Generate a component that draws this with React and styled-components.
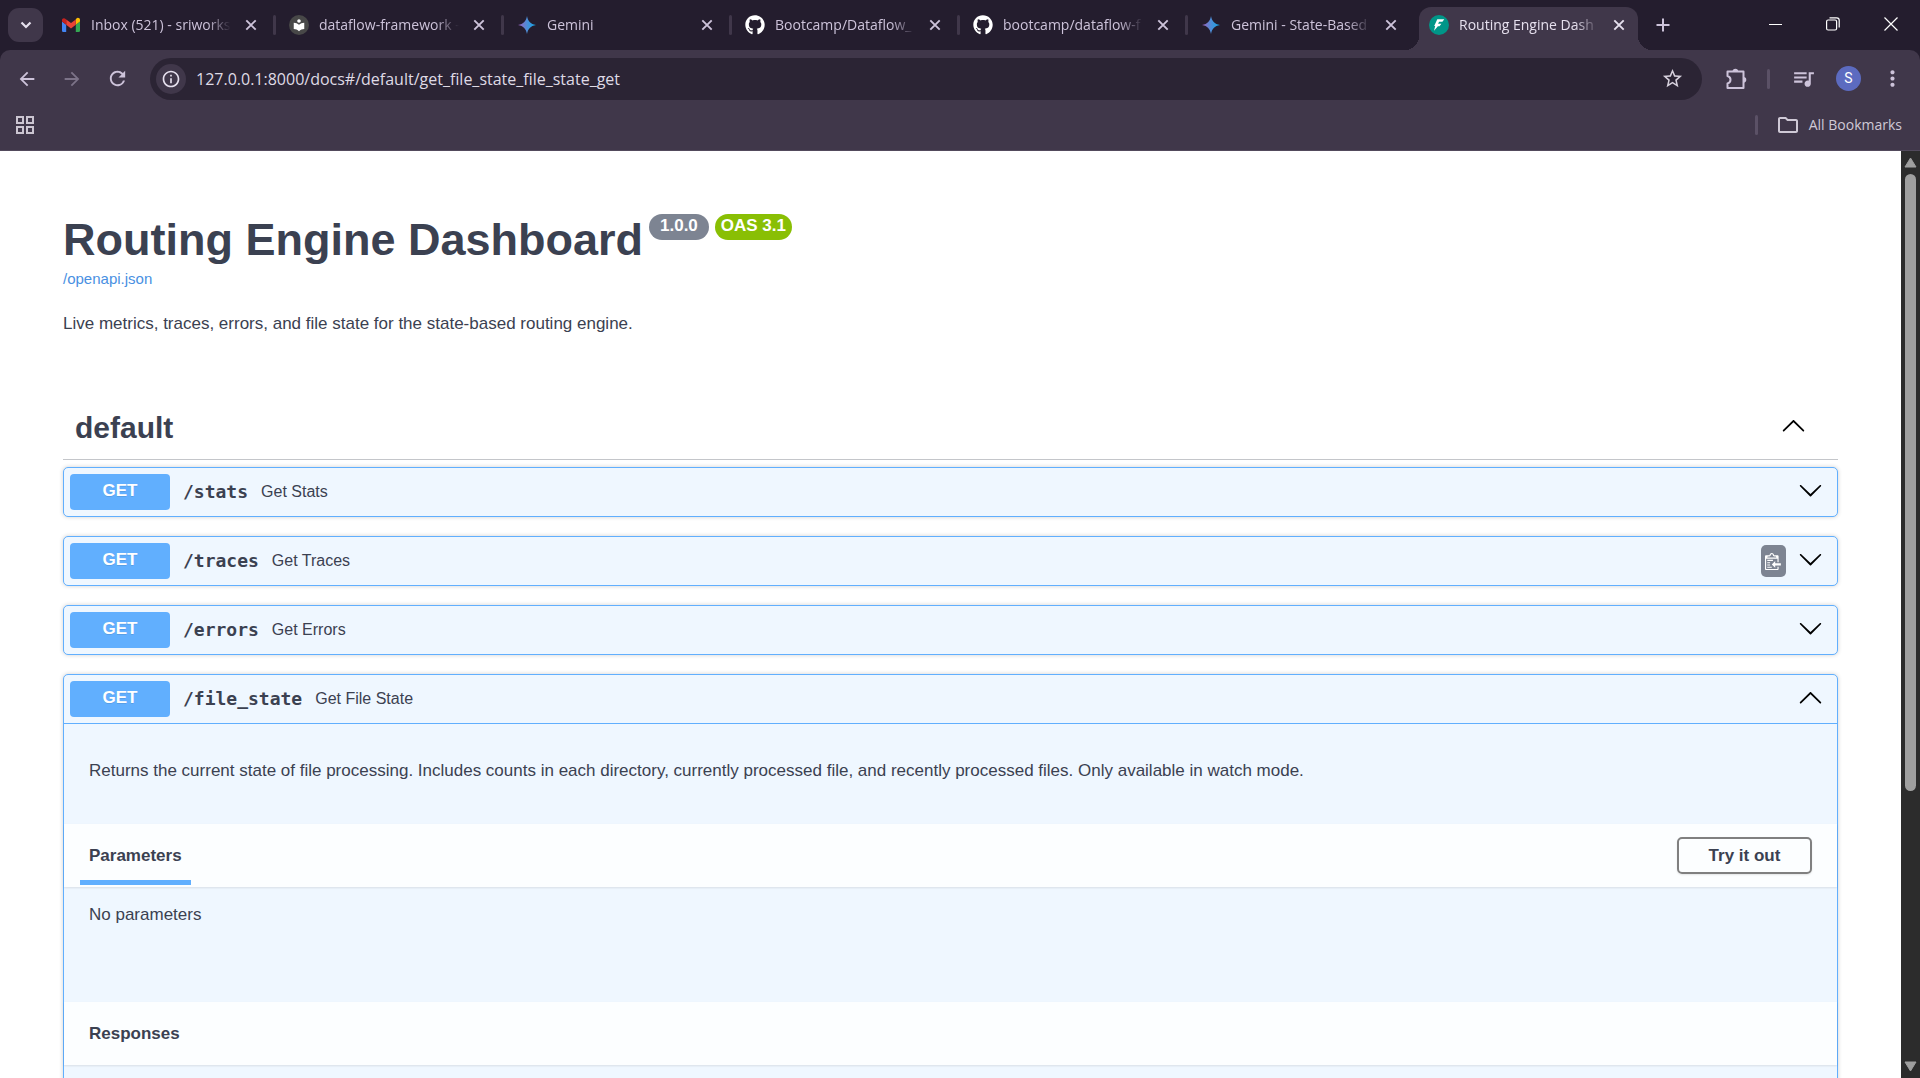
import React from "react";
import styled, { createGlobalStyle, css } from "styled-components";
import {
  MdArrowBack,
  MdArrowForward,
  MdRefresh,
  MdInfoOutline,
  MdStarBorder,
  MdQueueMusic,
  MdMoreVert,
  MdLocalLibrary,
  MdOutlineFolder,
} from "react-icons/md";
import { FaGithub } from "react-icons/fa";

const color = {
  frame: "#241d2e",
  toolbar: "#40374a",
  field: "#2b2434",
  chromeText: "#cdc3da",
  chromeLight: "#e6e0ee",
  ink: "#3b4151",
  get: "#61affe",
  getTint: "#eff7ff",
  slate: "#7d8492",
};

const uiFont = '"Open Sans", "Noto Sans", sans-serif';
const docFont = '"Liberation Sans", Arial, sans-serif';
const monoFont = '"DejaVu Sans Mono", monospace';

const GlobalStyle = createGlobalStyle`
  *, *::before, *::after { box-sizing: border-box; }
  body { margin: 0; background: #fff; }
  button { border: 0; padding: 0; background: none; font: inherit; color: inherit; cursor: pointer; }
  h1, h2, h3, h4, p { margin: 0; }
  svg { display: block; flex: none; }
`;

const Window = styled.div`
  display: flex;
  flex-direction: column;
  height: 100vh;
  overflow: hidden;
  background: #fff;
`;

/* ---------- browser chrome ---------- */

const Chrome = styled.header`
  flex: none;
  background: ${color.frame};
  color: ${color.chromeText};
  font-family: ${uiFont};
`;

const TabStrip = styled.div`
  display: flex;
  height: 50px;
  padding-left: 8px;
`;

const TabSearch = styled.button`
  display: grid;
  place-items: center;
  flex: none;
  width: 35px;
  height: 34px;
  margin: 8px 8px 0 0;
  border-radius: 11px;
  background: ${color.toolbar};
  color: ${color.chromeLight};
`;

const Separator = styled.span`
  flex: none;
  width: 3px;
  height: 20px;
  border-radius: 2px;
  background: ${(p) => (p.$hidden ? "transparent" : p.$tone || color.toolbar)};
`;

const TabSlot = styled.div`
  display: flex;
  align-items: center;
  gap: 3px;
  flex: 0 1 228px;
  min-width: 0;
`;

const Tab = styled.div`
  position: relative;
  display: flex;
  align-items: center;
  gap: 10px;
  flex: 1;
  min-width: 0;
  height: 43px;
  margin-top: 7px;
  padding: 0 9px 7px 10px;
  ${(p) =>
    p.$active &&
    css`
      background: ${color.toolbar};
      color: ${color.chromeLight};
      border-radius: 12px 12px 0 0;
      &::before,
      &::after {
        content: "";
        position: absolute;
        bottom: 0;
        width: 14px;
        height: 14px;
      }
      &::before {
        right: 100%;
        background: radial-gradient(circle at 0 0, transparent 14px, ${color.toolbar} 14px);
      }
      &::after {
        left: 100%;
        background: radial-gradient(circle at 100% 0, transparent 14px, ${color.toolbar} 14px);
      }
    `}
`;

const TabTitle = styled.button`
  flex: 1;
  min-width: 0;
  overflow: hidden;
  white-space: nowrap;
  text-align: left;
  font-size: 14px;
  line-height: 20px;
  mask-image: linear-gradient(to right, #000 calc(100% - 24px), transparent);
`;

const IconButton = styled.button`
  display: grid;
  place-items: center;
  flex: none;
  width: ${(p) => p.$size || 20}px;
  height: ${(p) => p.$size || 20}px;
  color: ${(p) => p.$tone || "inherit"};
`;

const NewTab = styled(IconButton)`
  margin: 10px 0 0 1px;
`;

const WindowControls = styled.div`
  display: flex;
  margin-left: auto;
  color: #fff;
`;

const WindowButton = styled.button`
  display: grid;
  place-items: center;
  width: 58px;
  height: 48px;
`;

const Toolbar = styled.div`
  display: flex;
  align-items: center;
  height: 50px;
  padding: 7px 14px 0 11px;
  background: ${color.toolbar};
  border-radius: 10px 10px 0 0;
`;

const NavButtons = styled.div`
  display: flex;
  gap: 13px;
  padding-right: 17px;
`;

const Omnibox = styled.div`
  display: flex;
  align-items: center;
  flex: 1;
  height: 42px;
  padding: 0 18px 0 6px;
  gap: 10px;
  border-radius: 21px;
  background: ${color.field};
`;

const SiteInfo = styled(IconButton)`
  border-radius: 50%;
  background: ${color.toolbar};
`;

const UrlInput = styled.input`
  flex: 1;
  min-width: 0;
  padding: 0;
  border: 0;
  outline: 0;
  background: none;
  color: #dfdae5;
  font-family: ${uiFont};
  font-size: 16px;
  line-height: 24px;
`;

const ToolbarActions = styled.div`
  display: flex;
  align-items: center;
  gap: 17px;
  padding-left: 20px;
`;

const Avatar = styled.button`
  width: 25px;
  height: 25px;
  border-radius: 50%;
  background: #5c6bc0;
  color: #fff;
  font-family: Roboto, sans-serif;
  font-size: 14px;
  line-height: 25px;
`;

const BookmarkBar = styled.div`
  display: flex;
  align-items: center;
  justify-content: space-between;
  height: 51px;
  padding: 0 18px 0 15px;
  background: ${color.toolbar};
  border-bottom: 1px solid #524a5c;
`;

const BookmarkGroup = styled.div`
  display: flex;
  align-items: center;
  gap: 18px;
`;

const AllBookmarks = styled.button`
  display: flex;
  align-items: center;
  gap: 9px;
  color: #cfc9d6;
  font-size: 14px;
  line-height: 20px;
`;

/* ---------- document ---------- */

const Viewport = styled.div`
  display: flex;
  flex: 1;
  min-height: 0;
`;

const Page = styled.main`
  flex: 1;
  min-width: 0;
  overflow: hidden;
  color: ${color.ink};
  font-family: ${docFont};
`;

const Wrapper = styled.div`
  max-width: 1825px;
  margin: 0 auto;
  padding: 0 25px;
`;

const Info = styled.section`
  padding: 63px 0 60px;
`;

const Title = styled.h1`
  display: flex;
  align-items: flex-start;
  font-size: 45px;
  line-height: 52px;
`;

const Badge = styled.span`
  margin-left: 6px;
  padding: 0 ${(p) => p.$pad}px;
  height: 26px;
  border-radius: 13px;
  background: ${(p) => p.$fill};
  color: #fff;
  font-size: 17px;
  line-height: 24px;
`;

const SpecLink = styled.a`
  display: block;
  width: max-content;
  margin-top: 3px;
  color: #4990e2;
  font-size: 15px;
  line-height: 20px;
  text-decoration: none;
`;

const Paragraph = styled.p`
  font-size: 17px;
  line-height: 24px;
`;

const Lead = styled(Paragraph)`
  margin-top: 23px;
`;

const TagHeader = styled.div`
  display: flex;
  align-items: center;
  justify-content: space-between;
  height: 64px;
  margin-bottom: 7px;
  padding: 0 32px 0 12px;
  border-bottom: 1px solid rgba(59, 65, 81, 0.3);
`;

const TagName = styled.h2`
  font-size: 30px;
  line-height: 36px;
`;

const Operation = styled.article`
  margin-bottom: 19px;
  border: 1px solid ${color.get};
  border-radius: 5px;
  background: ${color.getTint};
  box-shadow: 0 0 4px rgba(0, 0, 0, 0.19);
`;

const Summary = styled.div`
  display: flex;
  align-items: center;
  gap: 12px;
  padding: 6px 14px 6px 6px;
  ${(p) => p.$open && css`border-bottom: 1px solid ${color.get};`}
`;

const SummaryControl = styled.button`
  display: flex;
  align-items: center;
  gap: 13px;
  flex: 1;
  min-width: 0;
  text-align: left;
`;

const Method = styled.span`
  width: 100px;
  height: 36px;
  border-radius: 4px;
  background: ${color.get};
  color: #fff;
  font-size: 17px;
  font-weight: 700;
  line-height: 34px;
  text-align: center;
  text-shadow: 0 1px 0 rgba(0, 0, 0, 0.1);
`;

const Path = styled.span`
  font-family: ${monoFont};
  font-size: 18px;
  font-weight: 700;
  line-height: 24px;
`;

const Brief = styled.span`
  font-size: 16px;
  line-height: 24px;
`;

const CopyButton = styled.button`
  display: grid;
  place-items: center;
  width: 25px;
  height: 32px;
  border-radius: 5px;
  background: ${color.slate};
`;

const Description = styled.div`
  padding: 35px 25px 41px;
`;

const SectionHeader = styled.div`
  display: flex;
  align-items: center;
  justify-content: space-between;
  height: 63px;
  padding: 0 25px 0 16px;
  background: rgba(255, 255, 255, 0.8);
  box-shadow: 0 1px 2px rgba(0, 0, 0, 0.1);
`;

const SectionTitle = styled.h3`
  position: relative;
  padding: 0 9px;
  font-size: 17px;
  line-height: 24px;
  ${(p) =>
    p.$active &&
    css`
      &::after {
        content: "";
        position: absolute;
        left: 0;
        right: 0;
        bottom: -17px;
        height: 5px;
        background: ${color.get};
      }
    `}
`;

const TryButton = styled.button`
  width: 135px;
  height: 37px;
  border: 2px solid gray;
  border-radius: 5px;
  font-size: 17px;
  font-weight: 700;
  box-shadow: 0 1px 2px rgba(0, 0, 0, 0.1);
`;

const SectionBody = styled.div`
  min-height: 115px;
  padding: 16px 25px;
`;

/* ---------- scrollbar ---------- */

const Scrollbar = styled.div`
  display: flex;
  flex-direction: column;
  align-items: center;
  flex: none;
  width: 19px;
  background: #2c2c2c;
`;

const ScrollArrow = styled.span`
  display: grid;
  place-items: center;
  height: 23px;
`;

const ScrollTrack = styled.div`
  flex: 1;
`;

const ScrollThumb = styled.div`
  width: 11px;
  height: 70%;
  border-radius: 6px;
  background: #9f9f9f;
`;

/* ---------- drawings ---------- */

const CloseGlyph = () => (
  <svg width="12" height="12" viewBox="0 0 12 12" stroke="currentColor" strokeWidth="1.9" fill="none">
    <path d="M1.3 1.3l9.4 9.4M10.7 1.3l-9.4 9.4" />
  </svg>
);

const GmailIcon = () => (
  <svg width="20" height="20" viewBox="0 0 20 20">
    <path d="M1 5v10.700q0 1.300 1.300 1.300H5.200V9.700L1 6.500z" fill="#4285f4" />
    <path d="M19 5v10.700q0 1.300-1.300 1.300H14.800V9.700L19 6.500z" fill="#34a853" />
    <path d="M14.800 4.500v5.300L19 6.600V5c0-2-2.200-2.900-3.600-1.600z" fill="#fbbc04" />
    <path d="M5.200 9.800V4.500L10 8.100l4.800-3.600v5.300L10 13.400z" fill="#ea4335" />
    <path d="M1 5v1.600l4.200 3.200V4.500l-.6-.6C3.200 2.500 1 3.200 1 5z" fill="#c5221f" />
  </svg>
);

const ReaderDisc = styled.span`
  display: grid;
  place-items: center;
  flex: none;
  width: 20px;
  height: 20px;
  border-radius: 50%;
  background: #484848;
  color: #fff;
`;

const GeminiIcon = ({ id }) => (
  <svg width="20" height="20" viewBox="0 0 20 20">
    <defs>
      <linearGradient id={id} x1="0" x2="1">
        <stop offset="0.1" stopColor="#9168c0" />
        <stop offset="0.5" stopColor="#4d8ed8" />
        <stop offset="0.9" stopColor="#1ba1e3" />
      </linearGradient>
    </defs>
    <path d="M10 1c.9 5 3.500 8.100 9 9-5.500.9-8.100 4-9 9-.9-5-3.500-8.100-9-9 5.500-.9 8.100-4 9-9z" fill={`url(#${id})`} />
  </svg>
);

const FastApiIcon = () => (
  <svg width="20" height="20" viewBox="0 0 20 20">
    <circle cx="10" cy="10" r="10" fill="#009688" />
    <path d="M8.300 4.300h7l-1.900 2.500h-3.300l-1 1.900h3.300l-1.900 2.500H8.900L5 15.800l1.200-4.900H5.200z" fill="#fff" />
  </svg>
);

const PuzzleIcon = () => (
  <svg width="22" height="22" viewBox="0 0 22 22" fill="none" stroke="currentColor" strokeWidth="2" strokeLinejoin="round">
    <path d="M2.500 3.500H18.500V20H2.500V15.500C4.500 15 5.500 13.700 5.500 11.800S4.500 8.500 2.500 8z" />
    <path d="M7.600 3.500a2.800 2.800 0 0 1 5.600 0zM18.500 9a2.800 2.800 0 0 1 0 5.600z" fill="currentColor" stroke="none" />
  </svg>
);

const AppsIcon = () => (
  <svg width="20" height="20" viewBox="0 0 20 20" fill="none" stroke="#cbc5d1" strokeWidth="2">
    <path d="M2 2h6v6H2zM12 2h6v6h-6zM2 12h6v6H2zM12 12h6v6h-6z" />
  </svg>
);

const ARROW_DOWN =
  "M17.418 6.109c.272-.268.709-.268.979 0s.271.701 0 .969l-7.908 7.830c-.27.268-.707.268-.979 0l-7.908-7.830c-.27-.268-.27-.701 0-.969.271-.268.709-.268.979 0L10 13.250l7.418-7.141z";
const ARROW_UP =
  "M17.418 14.908c.272.268.709.268.979 0s.271-.701 0-.969l-7.908-7.830c-.27-.268-.707-.268-.979 0l-7.908 7.830c-.27.268-.27.701 0 .969.271.268.709.268.979 0L10 7.767l7.418 7.141z";

const Arrow = ({ up }) => (
  <svg width="25" height="25" viewBox="0 2 20 20">
    <path d={up ? ARROW_UP : ARROW_DOWN} />
  </svg>
);

const ClipboardIcon = () => (
  <svg width="17" height="20" viewBox="0 0 15 16" fill="#fff">
    <path d="M2 13h4v1H2v-1zm5-6H2v1h5V7zm2 3V8l-3 3 3 3v-2h5v-2H9zM4.500 9H2v1h2.500V9zM2 12h2.500v-1H2v1zm9 1h1v2c-.02.28-.11.52-.3.7-.19.18-.42.28-.7.3H1c-.55 0-1-.45-1-1V4c0-.55.45-1 1-1h3c0-1.110.89-2 2-2 1.110 0 2 .89 2 2h3c.55 0 1 .45 1 1v5h-1V6H1v9h10v-2zM2 5h8c0-.55-.45-1-1-1H8c-.55 0-1-.45-1-1s-.45-1-1-1-1 .45-1 1-.45 1-1 1H3c-.55 0-1 .45-1 1z" />
  </svg>
);

/* ---------- content ---------- */

const tabs = [
  { title: "Inbox (521) - sriworks", icon: <GmailIcon /> },
  { title: "dataflow-framework -", icon: <ReaderDisc><MdLocalLibrary size={14} /></ReaderDisc> },
  { title: "Gemini", icon: <GeminiIcon id="gemini-a" /> },
  { title: "Bootcamp/Dataflow_", icon: <FaGithub size={20} color="#fff" /> },
  { title: "bootcamp/dataflow-f", icon: <FaGithub size={20} color="#fff" /> },
  { title: "Gemini - State-Based", icon: <GeminiIcon id="gemini-b" />, last: true },
  { title: "Routing Engine Dash", icon: <FastApiIcon />, active: true },
];

const operations = [
  { path: "/stats", brief: "Get Stats" },
  { path: "/traces", brief: "Get Traces", copy: true },
  { path: "/errors", brief: "Get Errors" },
  { path: "/file_state", brief: "Get File State", open: true },
];

function BrowserChrome() {
  return (
    <Chrome>
      <TabStrip>
        <TabSearch aria-label="Search tabs">
          <svg width="12" height="8" viewBox="0 0 12 8" fill="none" stroke="currentColor" strokeWidth="2.200">
            <path d="M1.500 1.500L6 6l4.500-4.500" />
          </svg>
        </TabSearch>
        {tabs.map((t) => (
          <TabSlot key={t.title}>
            <Tab $active={t.active}>
              {t.icon}
              <TabTitle>{t.title}</TabTitle>
              <IconButton aria-label="Close tab">
                <CloseGlyph />
              </IconButton>
            </Tab>
            <Separator $hidden={t.active || t.last} />
            <span />
          </TabSlot>
        ))}
        <NewTab $size={30} aria-label="New tab">
          <svg width="14" height="14" viewBox="0 0 14 14" stroke="currentColor" strokeWidth="2">
            <path d="M7 .5v13M.5 7h13" />
          </svg>
        </NewTab>
        <WindowControls>
          <WindowButton aria-label="Minimize">
            <svg width="13" height="13" viewBox="0 0 13 13" stroke="currentColor">
              <path d="M0 6.500h13" />
            </svg>
          </WindowButton>
          <WindowButton aria-label="Restore">
            <svg width="14" height="14" viewBox="0 0 14 14" fill="none" stroke="currentColor" strokeWidth="1.200">
              <rect x="0.600" y="3" width="10" height="10" rx="1.500" />
              <path d="M3.500 .8h7.200q2.500 0 2.500 2.500v7.200" />
            </svg>
          </WindowButton>
          <WindowButton aria-label="Close">
            <svg width="14" height="14" viewBox="0 0 14 14" stroke="currentColor" strokeWidth="1.200">
              <path d="M.5 .5l13 13M13.500 .5l-13 13" />
            </svg>
          </WindowButton>
        </WindowControls>
      </TabStrip>
      <Toolbar>
        <NavButtons>
          <IconButton $size={32} aria-label="Back"><MdArrowBack size={22} /></IconButton>
          <IconButton $size={32} $tone="#7c7388" aria-label="Forward"><MdArrowForward size={22} /></IconButton>
          <IconButton $size={32} aria-label="Reload"><MdRefresh size={23} /></IconButton>
        </NavButtons>
        <Omnibox>
          <SiteInfo $size={30} $tone={color.chromeLight} aria-label="View site information">
            <MdInfoOutline size={20} />
          </SiteInfo>
          <UrlInput
            aria-label="Address"
            defaultValue="127.0.0.1:8000/docs#/default/get_file_state_file_state_get"
          />
          <IconButton $size={24} $tone="#d6d0dc" aria-label="Bookmark this page">
            <MdStarBorder size={23} />
          </IconButton>
        </Omnibox>
        <ToolbarActions>
          <IconButton $size={28} aria-label="Extensions"><PuzzleIcon /></IconButton>
          <Separator $tone="#5b5166" />
          <IconButton $size={32} aria-label="Media"><MdQueueMusic size={25} /></IconButton>
          <Avatar>S</Avatar>
          <IconButton $size={28} aria-label="Menu"><MdMoreVert size={25} /></IconButton>
        </ToolbarActions>
      </Toolbar>
      <BookmarkBar>
        <IconButton aria-label="Apps"><AppsIcon /></IconButton>
        <BookmarkGroup>
          <Separator $tone="#5b5166" />
          <AllBookmarks>
            <MdOutlineFolder size={24} />
            All Bookmarks
          </AllBookmarks>
        </BookmarkGroup>
      </BookmarkBar>
    </Chrome>
  );
}

function OperationBlock({ op }) {
  return (
    <Operation>
      <Summary $open={op.open}>
        <SummaryControl aria-expanded={!!op.open}>
          <Method>GET</Method>
          <Path>{op.path}</Path>
          <Brief>{op.brief}</Brief>
        </SummaryControl>
        {op.copy && (
          <CopyButton aria-label="Copy to clipboard">
            <ClipboardIcon />
          </CopyButton>
        )}
        <IconButton $size={25} aria-label={op.open ? "Collapse operation" : "Expand operation"}>
          <Arrow up={op.open} />
        </IconButton>
      </Summary>
      {op.open && (
        <>
          <Description>
            <Paragraph>
              Returns the current state of file processing. Includes counts in each directory, currently processed
              file, and recently processed files. Only available in watch mode.
            </Paragraph>
          </Description>
          <SectionHeader>
            <SectionTitle $active>Parameters</SectionTitle>
            <TryButton>Try it out</TryButton>
          </SectionHeader>
          <SectionBody>
            <Paragraph>No parameters</Paragraph>
          </SectionBody>
          <SectionHeader>
            <SectionTitle>Responses</SectionTitle>
          </SectionHeader>
          <SectionBody />
        </>
      )}
    </Operation>
  );
}

export default function App() {
  return (
    <Window>
      <GlobalStyle />
      <BrowserChrome />
      <Viewport>
        <Page>
          <Wrapper>
            <Info>
              <Title>
                Routing Engine Dashboard
                <Badge $fill={color.slate} $pad={11}>1.0.0</Badge>
                <Badge $fill="#89bf04" $pad={6}>OAS 3.1</Badge>
              </Title>
              <SpecLink href="/openapi.json">/openapi.json</SpecLink>
              <Lead>Live metrics, traces, errors, and file state for the state-based routing engine.</Lead>
            </Info>
            <section>
              <TagHeader>
                <TagName>default</TagName>
                <IconButton $size={25} aria-label="Collapse section">
                  <Arrow up />
                </IconButton>
              </TagHeader>
              {operations.map((op) => (
                <OperationBlock key={op.path} op={op} />
              ))}
            </section>
          </Wrapper>
        </Page>
        <Scrollbar aria-hidden="true">
          <ScrollArrow>
            <svg width="13" height="11" viewBox="0 0 13 11" fill="#9f9f9f">
              <path d="M6.500 1L12 10H1z" stroke="#9f9f9f" strokeLinejoin="round" />
            </svg>
          </ScrollArrow>
          <ScrollTrack>
            <ScrollThumb />
          </ScrollTrack>
          <ScrollArrow>
            <svg width="13" height="11" viewBox="0 0 13 11" fill="#9f9f9f">
              <path d="M6.500 10L12 1H1z" stroke="#9f9f9f" strokeLinejoin="round" />
            </svg>
          </ScrollArrow>
        </Scrollbar>
      </Viewport>
    </Window>
  );
}
